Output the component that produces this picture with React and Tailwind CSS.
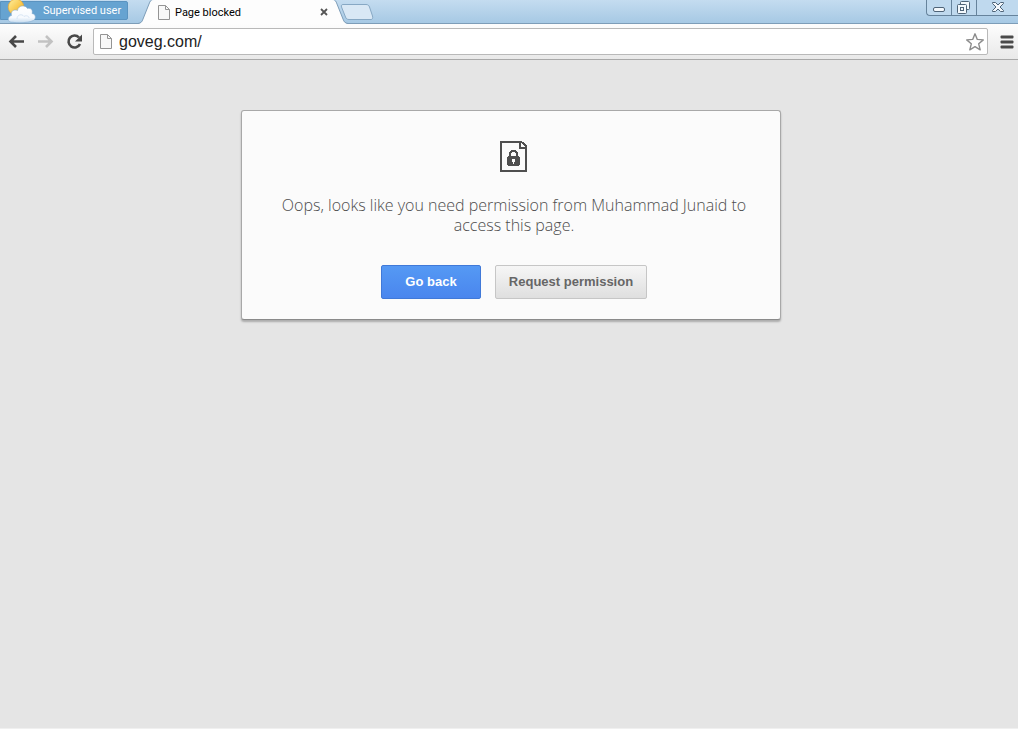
import React, { useState } from 'react';

function PageIcon({ className }) {
  return (
    <svg className={className} viewBox="0 0 12 15" fill="none" aria-hidden="true">
      <path d="M0.5 0.5H7.5L11.5 4.5V14.5H0.5Z" fill="#f8f8f8" stroke="#949494" />
      <path d="M7.5 0.5V4.5H11.5" stroke="#949494" />
    </svg>
  );
}

function WeatherAvatar() {
  return (
    <svg className="h-6 w-9 shrink-0" viewBox="1 -2 36 24" aria-hidden="true">
      <defs>
        <linearGradient id="sun" x1="0" y1="0" x2="1" y2="1">
          <stop offset="0" stopColor="#fdf0a0" />
          <stop offset="1" stopColor="#f5a80c" />
        </linearGradient>
        <linearGradient id="cloud" x1="0" y1="0" x2="0" y2="1">
          <stop offset="0" stopColor="#ffffff" />
          <stop offset="0.7" stopColor="#f6fafe" />
          <stop offset="1" stopColor="#c4daee" />
        </linearGradient>
      </defs>
      <circle cx="16" cy="6" r="7.800" fill="url(#sun)" stroke="#efa929" strokeWidth="0.7" />
      <path
        d="M13 21.300C7 22 7 15.500 11.500 14.500C10.500 10 14 8 17.500 9.500C18 4 25.500 3.500 27.500 7.500C31.500 6.500 33 10 32 12.500C36.500 13 36.500 19 32 20C28 22 16 22 13 21.300Z"
        fill="url(#cloud)"
        stroke="#86add0"
        strokeWidth="0.6"
      />
      <path d="M17 18C17 13.500 22 12.500 24 15.500C26 14 29 15 29 17" fill="none" stroke="#cfe0f1" strokeWidth="0.8" />
    </svg>
  );
}

function WindowControls() {
  return (
    <div className="flex h-4 rounded-bl border-b border-l border-[#66839c] bg-[#bfd9ee]">
      <button aria-label="Minimize" className="flex w-6 justify-center">
        <svg className="h-4 w-4" viewBox="0 0 16 16" aria-hidden="true">
          <rect x="2.500" y="7.500" width="11" height="4" rx="1.500" fill="#f3f8fc" stroke="#4f6478" />
        </svg>
      </button>
      <button aria-label="Restore" className="flex w-[26px] justify-center border-x border-[#66839c]">
        <svg className="h-4 w-4" viewBox="0 0 16 16" fill="#f3f8fc" stroke="#4f6478" aria-hidden="true">
          <rect x="4.500" y="1.500" width="9" height="8" rx="1" />
          <rect x="1.500" y="4.500" width="9" height="9" rx="1" />
          <rect x="4.500" y="7.500" width="3" height="3" />
        </svg>
      </button>
      <button aria-label="Close window" className="flex w-[41px] justify-center">
        <svg className="h-4 w-4" viewBox="0 0 16 16" aria-hidden="true">
          <path
            d="M2.500 2.500H5.500L8 5L10.500 2.500H13.500V3.500L10 7L13.500 10.500V11.500H10.500L8 9L5.500 11.500H2.500V10.500L6 7L2.500 3.500Z"
            fill="#f3f8fc"
            stroke="#4f6478"
          />
        </svg>
      </button>
    </div>
  );
}

function TabStrip() {
  return (
    <div className="flex h-6 items-start bg-linear-to-b from-[#c4dcf0] to-[#a5c8e4] shadow-[inset_0_-1px_0_#7d9db8]">
      <div className="mt-px flex h-[19px] w-32 items-center rounded-r-xs border border-[#5a93c0] bg-[#66a3d1] text-[11px] text-white">
        <WeatherAvatar />
        <span className="pt-0.5 pl-1.5 font-['Roboto',sans-serif] whitespace-nowrap">Supervised user</span>
      </div>

      {/* Active tab */}
      <div className="ml-2.5 flex h-6">
        <svg className="h-6 w-4" viewBox="0 0 16 24" aria-hidden="true">
          <path d="M0 24C3 23 4 22 5 19L11 4C12 1 13 0 16 0V24Z" fill="#fdfdfd" />
          <path d="M0 23.500C3 23 4 22 5 19L11 4C12 1 13 0 15 -1" fill="none" stroke="#7d9db8" />
        </svg>
        <div className="flex w-[178px] items-center bg-[#fdfdfd] pl-1">
          <PageIcon className="h-[15px] w-3" />
          <span className="flex-1 pt-0.5 pl-[5px] font-['Roboto',sans-serif] text-[11px] text-black">Page blocked</span>
          <button aria-label="Close tab" className="p-1">
            <svg className="h-2 w-2" viewBox="0 0 8 8" aria-hidden="true">
              <path d="M1 1L7 7M7 1L1 7" stroke="#555555" strokeWidth="1.800" />
            </svg>
          </button>
        </div>
        <svg className="h-6 w-4" viewBox="0 0 16 24" aria-hidden="true">
          <path d="M16 24C13 23 12 22 11 19L5 4C4 1 3 0 0 0V24Z" fill="#fdfdfd" />
          <path d="M16 23.500C13 23 12 22 11 19L5 4C4 1 3 0 1 -1" fill="none" stroke="#7d9db8" />
        </svg>
      </div>
      <button aria-label="New tab" className="-ml-2 pt-1">
        <svg className="h-4 w-[34px]" viewBox="0 0 34 16" aria-hidden="true">
          <path
            d="M3 0.500H26C28 0.500 29 1.500 29.500 3L32.500 12C33 14 32.500 15.500 31 15.500H9C7 15.500 6 14.500 5.500 13L1.500 3C1 1.500 1.500 0.500 3 0.500Z"
            fill="#d9e8f5"
            stroke="#87a8c4"
          />
        </svg>
      </button>

      <div className="ml-auto">
        <WindowControls />
      </div>
    </div>
  );
}

function Toolbar() {
  const [url, setUrl] = useState('goveg.com/');

  return (
    <div className="flex h-9 items-center border-b border-[#a9a9a9] bg-linear-to-b from-[#fdfdfd] to-[#e9e9e9] pl-2">
      <div className="flex gap-3">
        <button aria-label="Back">
          <svg className="h-4 w-[17px]" viewBox="0 0 17 16" fill="none" stroke="#484848" strokeWidth="2.600" aria-hidden="true">
            <path d="M16 7.500H3M8 2L2.500 7.500L8 13" />
          </svg>
        </button>
        <button aria-label="Forward">
          <svg className="h-4 w-[17px]" viewBox="0 0 17 16" fill="none" stroke="#c2c2c2" strokeWidth="2.600" aria-hidden="true">
            <path d="M1 7.500H14M9 2L14.500 7.500L9 13" />
          </svg>
        </button>
        <button aria-label="Reload">
          <svg className="h-4 w-[17px]" viewBox="0 0 17 16" aria-hidden="true">
            <path d="M13 3.500A6 6 0 1 0 14 10" fill="none" stroke="#484848" strokeWidth="2.600" />
            <path d="M16 0.500V7.500H9Z" fill="#484848" />
          </svg>
        </button>
      </div>
      <div className="ml-2.5 flex h-[27px] flex-1 items-center rounded-xs border border-[#b9b9b9] bg-white px-1.5">
        <PageIcon className="h-[15px] w-3" />
        <input
          aria-label="Address"
          value={url}
          onChange={(e) => setUrl(e.target.value)}
          className="min-w-0 flex-1 pl-[7px] font-['Liberation_Sans',sans-serif] text-base text-[#222222] outline-none"
        />
        <button aria-label="Bookmark this page" className="-mr-1">
          <svg className="h-5 w-5" viewBox="0 0 20 20" aria-hidden="true">
            <path
              d="M10 1.800L12.300 7.400L18.300 7.900L13.700 11.800L15.200 17.800L10 14.600L4.800 17.800L6.300 11.800L1.700 7.900L7.700 7.400Z"
              fill="#ffffff"
              stroke="#8c8c8c"
              strokeWidth="1.400"
              strokeLinejoin="round"
            />
          </svg>
        </button>
      </div>
      <button aria-label="Menu" className="px-3 pr-1">
        <svg className="h-[14px] w-[14px]" viewBox="0 0 14 14" fill="#4a4a4a" aria-hidden="true">
          <rect x="0.500" y="0.500" width="13" height="3" rx="1" />
          <rect x="0.500" y="5.500" width="13" height="3" rx="1" />
          <rect x="0.500" y="10.500" width="13" height="3" rx="1" />
        </svg>
      </button>
    </div>
  );
}

function BlockedIcon() {
  return (
    <svg className="h-8 w-7" viewBox="0 0 28 32" shapeRendering="crispEdges" aria-hidden="true">
      <path
        d="M0 0H22V1H24V2H25V3H26V4H27V31H0ZM2 2V29H25V8H19V2ZM21 2V6H25V5H24V4H23V3H22V2Z"
        fill="#4f4f4f"
        fillRule="evenodd"
      />
      <path
        d="M7 16H8V15H9V11H10V10H11V9H16V10H17V11H18V15H19V16H20V24H19V25H8V24H7ZM11 15H16V12H15V11H12V12H11Z"
        fill="#4f4f4f"
        fillRule="evenodd"
      />
      <path d="M12 18H15V21H14V23H13V21H12Z" fill="#fbfbfb" />
    </svg>
  );
}

function App() {
  return (
    <div className="flex min-h-screen flex-col border-b border-[#f0f0f0] bg-[#e5e5e5]">
      <header>
        <TabStrip />
        <Toolbar />
      </header>

      <main className="flex-1 pt-[50px] pl-1">
        <div className="mx-auto flex w-full max-w-[540px] flex-col items-center rounded-[3px] border border-[#a8a8a8] border-b-[#8a8a8a] bg-[#fbfbfb] pt-[30px] pr-6 pb-5 pl-[30px] shadow-[0_2px_2px_rgba(0,0,0,0.25)]">
          <BlockedIcon />
          <p className="pt-[22px] text-center font-['Open_Sans',sans-serif] text-base leading-5 font-light text-[#4d4d4d]">
            Oops, looks like you need permission from Muhammad Junaid to access this page.
          </p>
          <div className="flex gap-3.5 pt-[30px] font-['Liberation_Sans',sans-serif] text-[13px] font-bold">
            <button className="h-[34px] w-[100px] rounded-xs border border-[#4079d8] bg-linear-to-b from-[#5599f4] to-[#4a86ee] text-white">
              Go back
            </button>
            <button className="h-[34px] w-[152px] rounded-xs border border-[#c6c6c6] bg-linear-to-b from-[#f6f6f6] to-[#dfdfdf] text-[#666666]">
              Request permission
            </button>
          </div>
        </div>
      </main>
    </div>
  );
}

export default App;
